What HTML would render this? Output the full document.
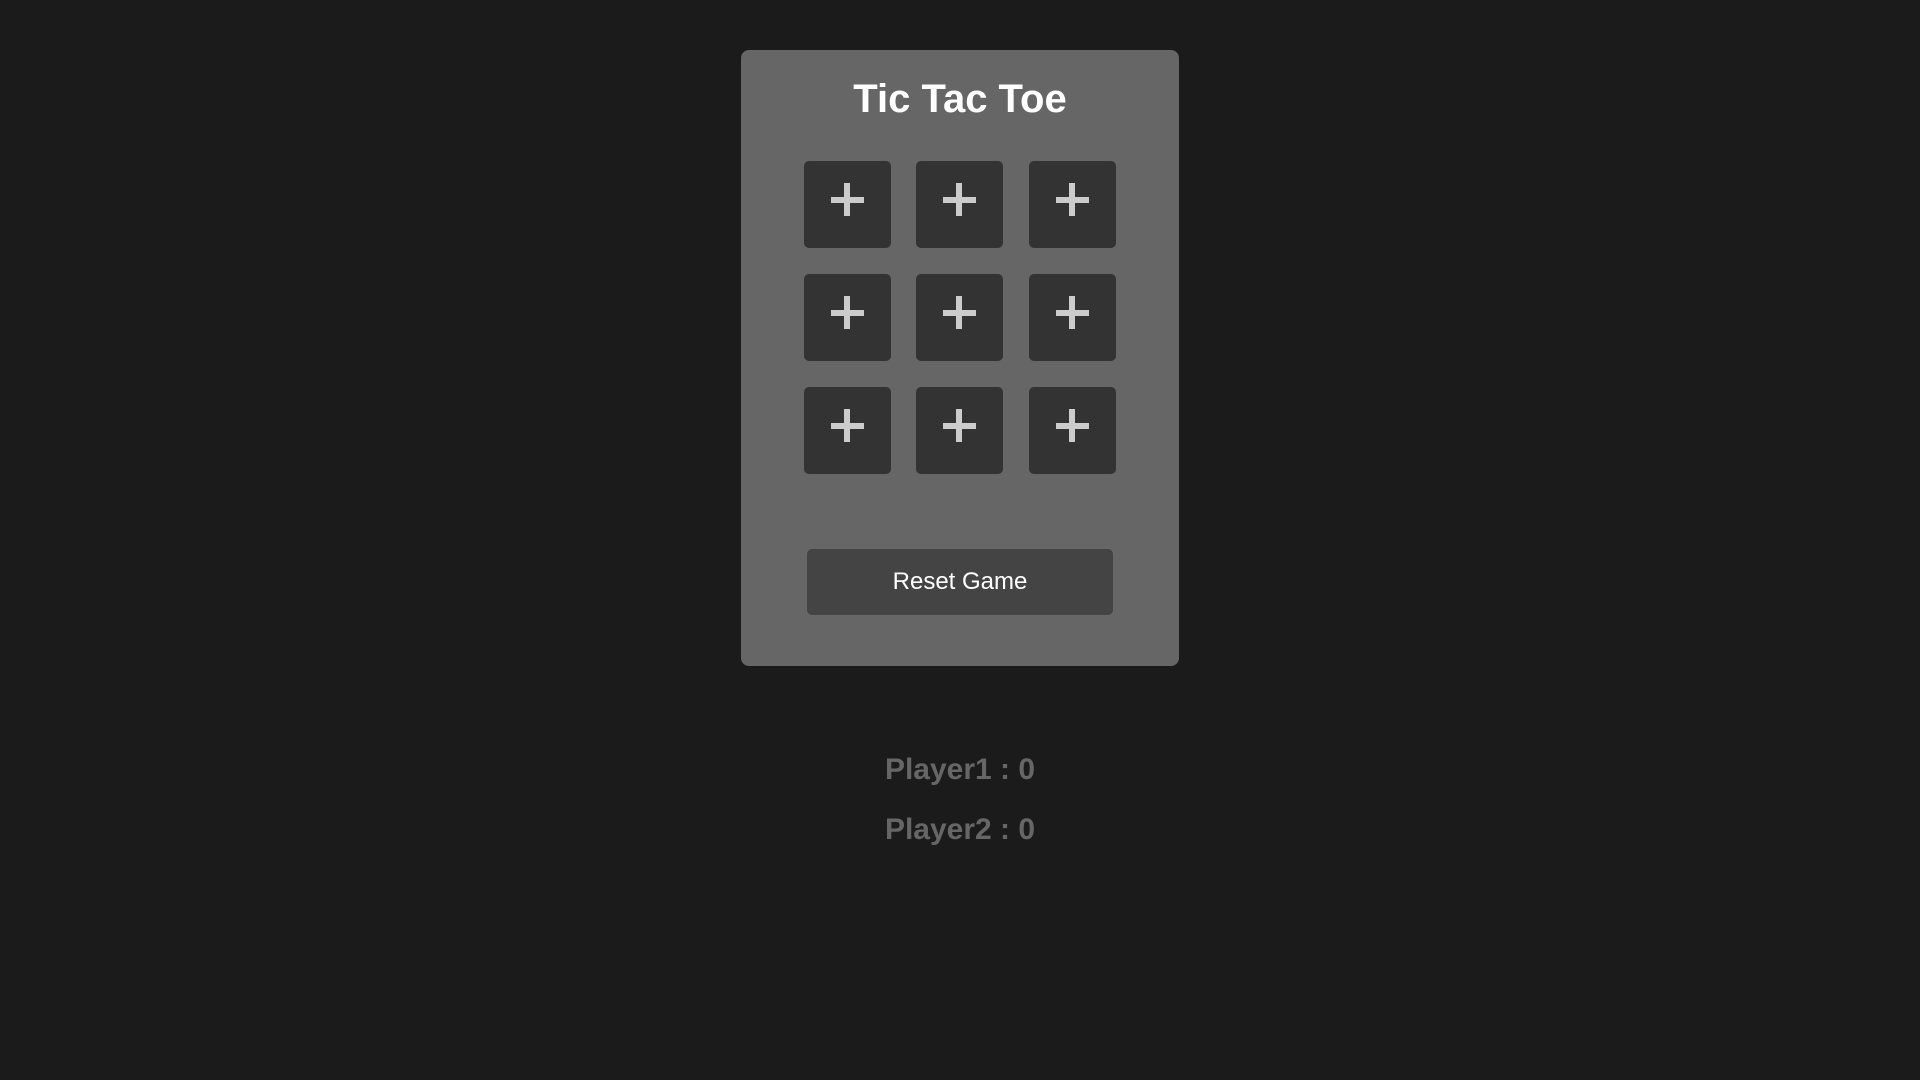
<!DOCTYPE html>
<html><head><style>
body{margin:0;width:1920px;height:1080px;background:#1b1b1b;font-family:"Liberation Sans",Arial,sans-serif;position:relative;overflow:hidden}
.card{position:absolute;left:741px;top:50px;width:438px;height:616px;background:#666;border-radius:8px}
.t{position:absolute;left:0;width:1920px;text-align:center;line-height:1;white-space:nowrap}
.cell{position:absolute;width:87px;height:87px;background:#333;border-radius:5px}
.cell:before{content:"";position:absolute;left:27px;top:36px;width:33px;height:6px;background:#ccc}
.cell:after{content:"";position:absolute;left:40px;top:22px;width:6px;height:33px;background:#ccc}
.btn{position:absolute;left:807px;top:549px;width:306px;height:66px;background:#444;border-radius:5px}
</style></head><body>
<div class="card"></div>
<div class="t" style="top:79px;font-size:40px;font-weight:bold;color:#fff">Tic Tac Toe</div>
<div class="cell" style="left:804px;top:161px"></div>
<div class="cell" style="left:916px;top:161px"></div>
<div class="cell" style="left:1029px;top:161px"></div>
<div class="cell" style="left:804px;top:274px"></div>
<div class="cell" style="left:916px;top:274px"></div>
<div class="cell" style="left:1029px;top:274px"></div>
<div class="cell" style="left:804px;top:387px"></div>
<div class="cell" style="left:916px;top:387px"></div>
<div class="cell" style="left:1029px;top:387px"></div>
<div class="btn"></div>
<div class="t" style="top:570px;font-size:24px;color:#fff">Reset Game</div>
<div class="t" style="top:755px;font-size:30px;font-weight:bold;color:#666">Player1 : 0</div>
<div class="t" style="top:815px;font-size:30px;font-weight:bold;color:#666">Player2 : 0</div>
</body></html>
